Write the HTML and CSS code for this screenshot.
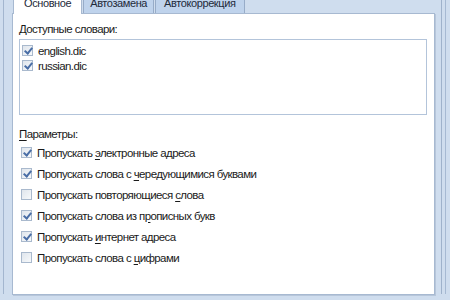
FILE: index.html
```html
<!DOCTYPE html>
<html lang="ru">
<head>
<meta charset="utf-8">
<link rel="stylesheet" href="styles.css">
</head>
<body>
<div class="frame">
  <div class="tabs">
    <div class="tab active">Основное</div>
    <div class="tab">Автозамена</div>
    <div class="tab">Автокоррекция</div>
  </div>
  <div class="panel">
    <div class="label">Доступные словари:</div>
    <div class="listbox">
      <div class="litem"><span class="cb on"></span><span>english.dic</span></div>
      <div class="litem"><span class="cb on"></span><span>russian.dic</span></div>
    </div>
    <div class="label params"><u>П</u>араметры:</div>
    <div class="opts">
      <div class="opt"><span class="cb on"></span><span>Пропускать <u>э</u>лектронные адреса</span></div>
      <div class="opt"><span class="cb on"></span><span>Пропускать слова с <u>ч</u>ередующимися буквами</span></div>
      <div class="opt"><span class="cb"></span><span>Пропускать повторяющиеся <u>с</u>лова</span></div>
      <div class="opt"><span class="cb on"></span><span>Пропускать слова из п<u>р</u>описных букв</span></div>
      <div class="opt"><span class="cb on"></span><span>Пропускать <u>и</u>нтернет адреса</span></div>
      <div class="opt"><span class="cb"></span><span>Пропускать слова с <u>ц</u>ифрами</span></div>
    </div>
  </div>
</div>
</body>
</html>
```
FILE: styles.css
```css
html, body {
  margin: 0;
  padding: 0;
  width: 450px;
  height: 300px;
  overflow: hidden;
  background: #cfddee;
  font-family: "Liberation Sans", Arial, sans-serif;
  font-size: 11.5px;
  letter-spacing: -0.6px;
  color: #1a1a1a;
}
.frame {
  margin-left: 3px;
  width: 439px;
  height: 300px;
  border-left: 1px solid #a3b6cf;
  border-right: 1px solid #9fb2cb;
  box-sizing: border-box;
  padding-left: 8px;
  padding-right: 6px;
  position: relative;
}
.frame::after {
  content: "";
  position: absolute;
  right: -5px;
  top: 0;
  bottom: 0;
  width: 1px;
  background: #a6b9d2;
}
.tabs {
  display: flex;
  height: 19px;
  margin-top: -6px;
  padding-left: 1px;
}
.tab {
  box-sizing: border-box;
  height: 19px;
  line-height: 17px;
  padding: 0 6px;
  font-size: 11px;
  letter-spacing: -0.4px;
  background: #bfd3ec;
  border: 1px solid #97acc8;
  border-bottom: none;
  margin-right: 1px;
  color: #1e2a3a;
}
.tab:last-child {
  padding: 0 8px;
}
.tab.active {
  background: #fff;
  height: 20px;
  padding: 0 10px;
  position: relative;
  z-index: 1;
  border-color: #a7b9d1;
}
.panel {
  background: #fff;
  border: 1px solid #a7b9d1;
  box-shadow: 1px 1px 0 #b7c6da;
  height: 282px;
  box-sizing: border-box;
  padding: 6px 7px 0 6px;
}
.label {
  height: 18px;
  line-height: 18px;
}
.listbox {
  margin-top: 1px;
  height: 76px;
  box-sizing: border-box;
  border: 1px solid #b3c4da;
  padding: 3px 2px;
}
.litem {
  display: flex;
  align-items: center;
  height: 15px;
}
.cb {
  display: inline-block;
  width: 11px;
  height: 11px;
  box-sizing: border-box;
  border: 1px solid #a9b9cd;
  background: linear-gradient(135deg, #dfe5ec, #f7f9fb);
  margin-right: 5px;
  flex: none;
  position: relative;
}
.cb.on::after {
  content: "";
  position: absolute;
  left: 3px;
  top: 0px;
  width: 3px;
  height: 6px;
  border-right: 2px solid #4a6ea6;
  border-bottom: 2px solid #4a6ea6;
  transform: rotate(40deg);
}
.params {
  margin-top: 10px;
}
.opts {
  margin-top: -1px;
  padding-left: 2px;
}
.opt {
  display: flex;
  align-items: center;
  height: 21px;
}
u {
  text-decoration: underline;
  text-underline-offset: 2px;
}
```
